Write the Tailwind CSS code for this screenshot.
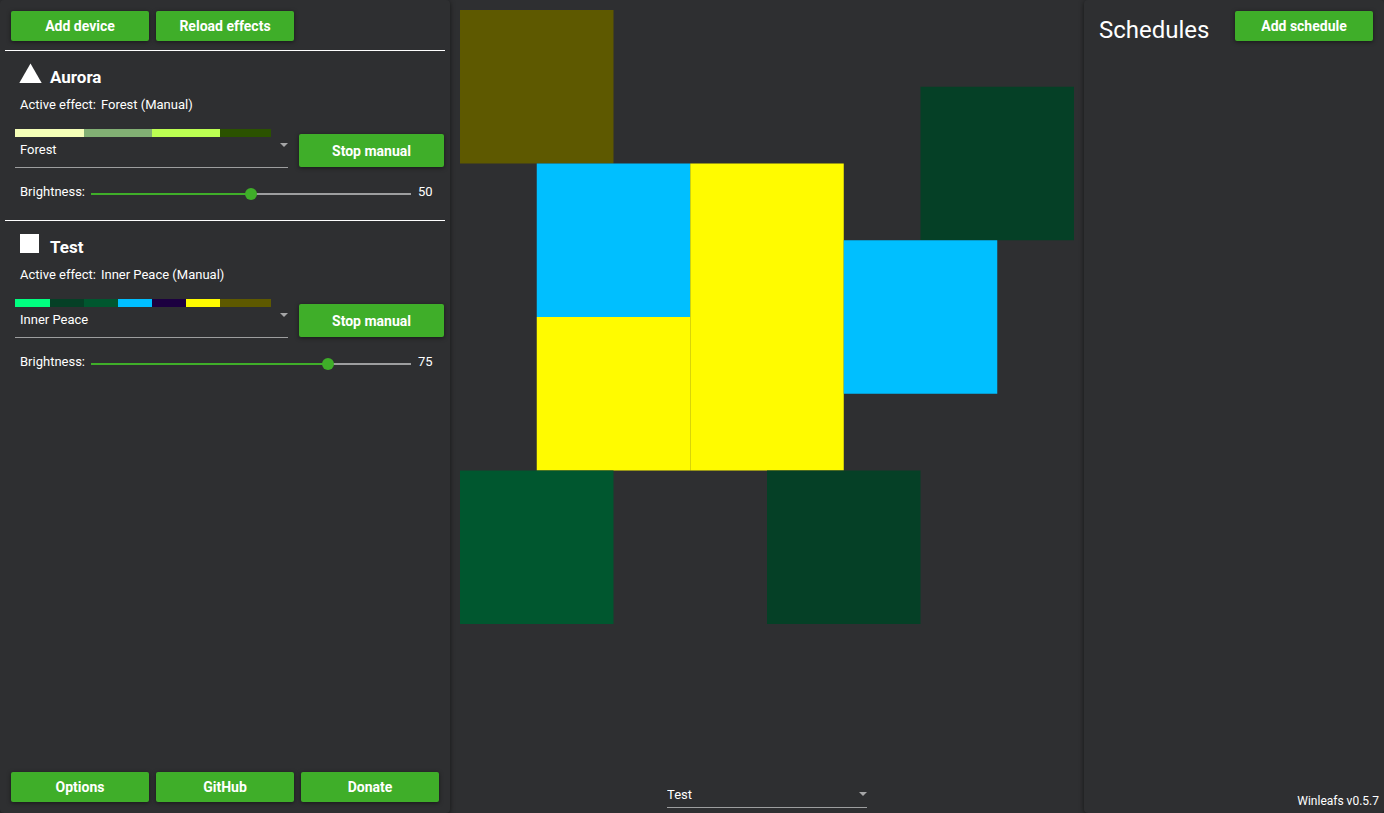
<!DOCTYPE html>
<html lang="en">
<head>
<meta charset="utf-8">
<title>Winleafs</title>
<script src="https://cdn.jsdelivr.net/npm/@tailwindcss/browser@4"></script>
</head>
<body class="flex h-screen overflow-hidden bg-[#2e2f31] font-['Roboto',sans-serif] text-[13px] leading-4 text-white">

<aside class="flex w-[450px] shrink-0 flex-col rounded-sm shadow-[0_1px_5px_rgba(0,0,0,0.55)]">
  <div class="flex gap-[7px] px-[11px] pt-[11px] pb-[9px]">
    <button class="h-[30px] w-[138px] rounded-xs bg-[#3fae29] text-sm font-bold shadow-[0_1px_4px_rgba(0,0,0,0.5)]">Add device</button>
    <button class="h-[30px] w-[138px] rounded-xs bg-[#3fae29] text-sm font-bold shadow-[0_1px_4px_rgba(0,0,0,0.5)]">Reload effects</button>
  </div>

  <section class="mx-[5px] h-[170px] border-t border-white pt-3 pl-[10px]">
    <div class="flex h-6 gap-2 pl-1">
      <svg class="h-6 w-[23px]" viewBox="0 0 23 24"><path d="M11.5 0.5 L22.7 20 H0.3 Z" fill="#fff"/></svg>
      <h2 class="pt-0.5 text-[17px] leading-6 font-bold">Aurora</h2>
    </div>
    <p class="mt-[10px] flex gap-[5px] pl-[5px]"><span>Active effect:</span><span>Forest (Manual)</span></p>
    <div class="mt-4 flex gap-[11px]">
      <div class="w-[273px]">
        <div class="flex h-2 w-64">
          <div class="w-[69px] bg-[#f5ffb8]"></div><div class="w-[68px] bg-[#82b074]"></div><div class="w-[68px] bg-[#bcff52]"></div><div class="w-[51px] bg-[#2b5200]"></div>
        </div>
        <div class="relative">
          <select aria-label="Effect for Aurora" class="block h-[31px] w-full appearance-none border-b border-[#9d9e9f] bg-transparent pb-1 pl-[5px] outline-none"><option>Forest</option></select>
          <svg class="pointer-events-none absolute top-1.5 right-0 h-1 w-2" viewBox="0 0 8 4"><path d="M0 0H8L4 4Z" fill="#a5a6a7"/></svg>
        </div>
      </div>
      <button class="mt-[5px] h-[33px] w-[145px] rounded-xs bg-[#3fae29] text-sm font-bold shadow-[0_1px_4px_rgba(0,0,0,0.5)]">Stop manual</button>
    </div>
    <div class="mt-4 flex pl-[5px]">
      <label for="b1" class="w-[71px]">Brightness:</label>
      <input id="b1" type="range" min="0" max="100" value="50" class="mt-1 h-3 w-80 appearance-none bg-[linear-gradient(to_right,#3fae29_50%,#9d9e9f_50%)] bg-[length:100%_2px] bg-center bg-no-repeat [&::-webkit-slider-thumb]:h-3 [&::-webkit-slider-thumb]:w-3 [&::-webkit-slider-thumb]:appearance-none [&::-webkit-slider-thumb]:rounded-full [&::-webkit-slider-thumb]:bg-[#3fae29]">
      <output for="b1" class="pl-[7px]">50</output>
    </div>
  </section>

  <section class="mx-[5px] h-[170px] border-t border-white pt-3 pl-[10px]">
    <div class="flex h-6 gap-2 pl-1">
      <svg class="h-6 w-[23px]" viewBox="0 0 23 24"><rect x="1" y="1" width="19" height="19" fill="#fff"/></svg>
      <h2 class="pt-0.5 text-[17px] leading-6 font-bold">Test</h2>
    </div>
    <p class="mt-[10px] flex gap-[5px] pl-[5px]"><span>Active effect:</span><span>Inner Peace (Manual)</span></p>
    <div class="mt-4 flex gap-[11px]">
      <div class="w-[273px]">
        <div class="flex h-2 w-64">
          <div class="w-[35px] bg-[#00ff80]"></div><div class="w-[34px] bg-[#054026]"></div><div class="w-[34px] bg-[#00572f]"></div><div class="w-[34px] bg-[#00bfff]"></div><div class="w-[34px] bg-[#1c0040]"></div><div class="w-[34px] bg-[#fffb00]"></div><div class="w-[51px] bg-[#5e5900]"></div>
        </div>
        <div class="relative">
          <select aria-label="Effect for Test" class="block h-[31px] w-full appearance-none border-b border-[#9d9e9f] bg-transparent pb-1 pl-[5px] outline-none"><option>Inner Peace</option></select>
          <svg class="pointer-events-none absolute top-1.5 right-0 h-1 w-2" viewBox="0 0 8 4"><path d="M0 0H8L4 4Z" fill="#a5a6a7"/></svg>
        </div>
      </div>
      <button class="mt-[5px] h-[33px] w-[145px] rounded-xs bg-[#3fae29] text-sm font-bold shadow-[0_1px_4px_rgba(0,0,0,0.5)]">Stop manual</button>
    </div>
    <div class="mt-4 flex pl-[5px]">
      <label for="b2" class="w-[71px]">Brightness:</label>
      <input id="b2" type="range" min="0" max="100" value="75" class="mt-1 h-3 w-80 appearance-none bg-[linear-gradient(to_right,#3fae29_75%,#9d9e9f_75%)] bg-[length:100%_2px] bg-center bg-no-repeat [&::-webkit-slider-thumb]:h-3 [&::-webkit-slider-thumb]:w-3 [&::-webkit-slider-thumb]:appearance-none [&::-webkit-slider-thumb]:rounded-full [&::-webkit-slider-thumb]:bg-[#3fae29]">
      <output for="b2" class="pl-[7px]">75</output>
    </div>
  </section>

  <div class="mt-auto flex gap-[7px] px-[11px] pb-[11px]">
    <button class="h-[30px] w-[138px] rounded-xs bg-[#3fae29] text-sm font-bold shadow-[0_1px_4px_rgba(0,0,0,0.5)]">Options</button>
    <button class="h-[30px] w-[138px] rounded-xs bg-[#3fae29] text-sm font-bold shadow-[0_1px_4px_rgba(0,0,0,0.5)]">GitHub</button>
    <button class="h-[30px] w-[138px] rounded-xs bg-[#3fae29] text-sm font-bold shadow-[0_1px_4px_rgba(0,0,0,0.5)]">Donate</button>
  </div>
</aside>

<main class="flex min-w-0 flex-1 flex-col items-center justify-between px-[10px] pt-[10px] pb-[5px]">
  <!-- Panel layout: each panel is 2 units wide -->
  <svg class="w-full" viewBox="0 0 8 8" role="img" aria-label="Panel layout">
    <rect x="0" y="0" width="2" height="2" fill="#5e5900"/>
    <rect x="6" y="1" width="2" height="2" fill="#054026"/>
    <rect x="1" y="2" width="2" height="2" fill="#00bfff"/>
    <rect x="1" y="4" width="2" height="2" fill="#fffb00"/>
    <rect x="3" y="2" width="2" height="4" fill="#fffb00"/>
    <rect x="5" y="3" width="2" height="2" fill="#00bfff"/>
    <rect x="0" y="6" width="2" height="2" fill="#00572f"/>
    <rect x="4" y="6" width="2" height="2" fill="#054026"/>
  </svg>
  <div class="relative w-[200px]">
    <select aria-label="Device" class="block h-7 w-full appearance-none border-b border-[#9d9e9f] bg-transparent pt-0.5 outline-none"><option>Test</option></select>
    <svg class="pointer-events-none absolute top-3 right-0 h-1 w-2" viewBox="0 0 8 4"><path d="M0 0H8L4 4Z" fill="#a5a6a7"/></svg>
  </div>
</main>

<aside class="flex w-[300px] shrink-0 flex-col justify-between rounded-sm shadow-[0_1px_5px_rgba(0,0,0,0.55)]">
  <div class="flex justify-between pt-[11px] pr-[11px] pl-[15px]">
    <h1 class="pt-[3px] text-2xl leading-8">Schedules</h1>
    <button class="h-[30px] w-[138px] rounded-xs bg-[#3fae29] text-sm font-bold shadow-[0_1px_4px_rgba(0,0,0,0.5)]">Add schedule</button>
  </div>
  <p class="pr-[5px] pb-1 text-right text-xs">Winleafs v0.5.7</p>
</aside>

</body>
</html>
